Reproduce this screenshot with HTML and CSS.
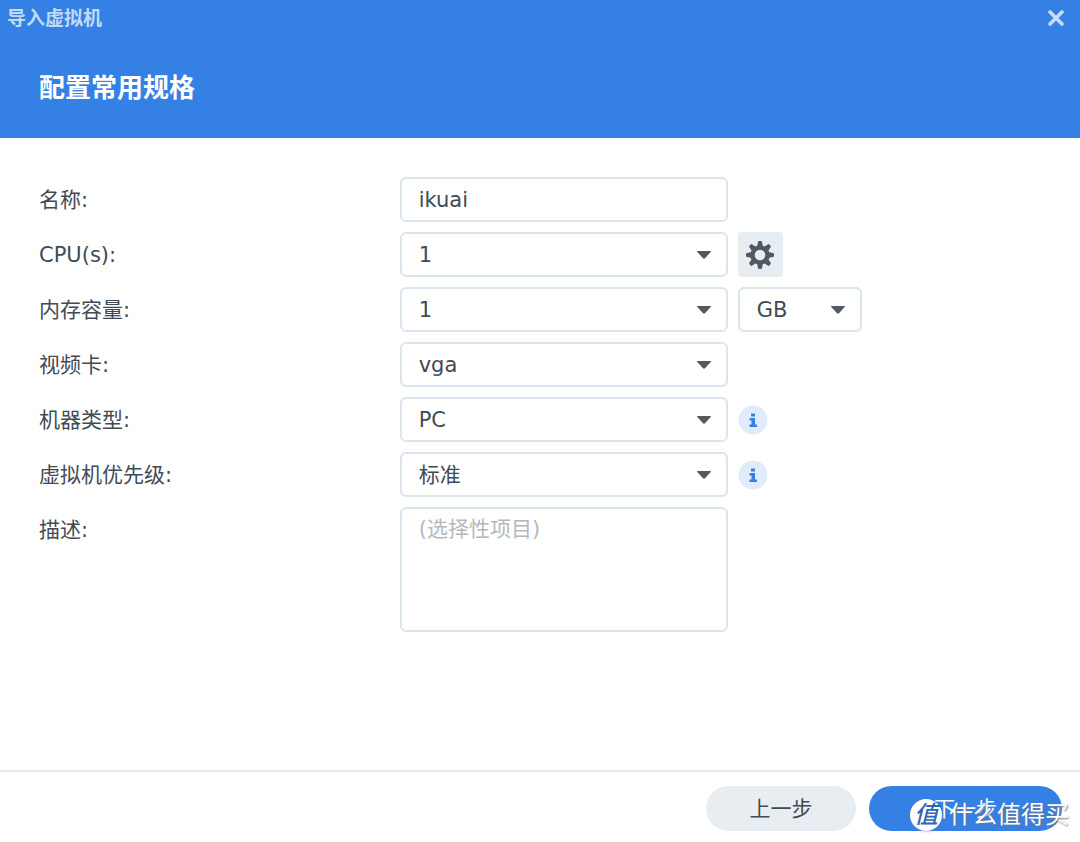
FILE: index.html
```html
<!DOCTYPE html>
<html lang="zh-CN">
<head>
    <meta charset="UTF-8">
    <meta name="viewport" content="width=device-width, initial-scale=1.0">
    <title>导入虚拟机</title>
    <link rel="stylesheet" href="styles.css">
</head>
<body>
    <header class="header">
        <div class="title-bar">
            <span class="title">导入虚拟机</span>
            <button type="button" class="close" aria-label="关闭">
                <svg width="18" height="18" viewBox="0 0 18 18"><path d="M3 3L15 15M15 3L3 15"/></svg>
            </button>
        </div>
        <h1 class="heading">配置常用规格</h1>
    </header>

    <form class="wizard" id="wizard">
        <div class="row">
            <label for="name">名称:</label>
            <input type="text" class="field" id="name" value="ikuai">
        </div>
        <div class="row">
            <label for="cpu">CPU(s):</label>
            <div class="select field">
                <select id="cpu"><option>1</option><option>2</option></select>
                <svg class="caret" width="14" height="8" viewBox="0 0 14 8"><path d="M.5 0h13q.8.4.2 1L8 7.300q-1 .9-2 0L.3 1Q-.3.400.5 0z"/></svg>
            </div>
            <button type="button" class="gear" aria-label="CPU 设置">
                <svg width="28" height="28" viewBox="-14 -14 28 28">
                    <g id="teeth">
                        <path id="tooth" d="M-3-8L-2-13Q-1.800-14-1-14H1Q1.800-14 2-13L3-8z"/>
                        <use href="#tooth" transform="rotate(45)"/>
                        <use href="#tooth" transform="rotate(90)"/>
                        <use href="#tooth" transform="rotate(135)"/>
                    </g>
                    <use href="#teeth" transform="rotate(180)"/>
                    <circle class="ring" r="7.500"/>
                </svg>
            </button>
        </div>
        <div class="row">
            <label for="memory">内存容量:</label>
            <div class="select field">
                <select id="memory"><option>1</option><option>2</option></select>
                <svg class="caret" width="14" height="8" viewBox="0 0 14 8"><path d="M.5 0h13q.8.4.2 1L8 7.300q-1 .9-2 0L.3 1Q-.3.400.5 0z"/></svg>
            </div>
            <div class="select unit">
                <select aria-label="单位"><option>GB</option><option>MB</option></select>
                <svg class="caret" width="14" height="8" viewBox="0 0 14 8"><path d="M.5 0h13q.8.4.2 1L8 7.300q-1 .9-2 0L.3 1Q-.3.400.5 0z"/></svg>
            </div>
        </div>
        <div class="row">
            <label for="video">视频卡:</label>
            <div class="select field">
                <select id="video"><option>vga</option></select>
                <svg class="caret" width="14" height="8" viewBox="0 0 14 8"><path d="M.5 0h13q.8.4.2 1L8 7.300q-1 .9-2 0L.3 1Q-.3.400.5 0z"/></svg>
            </div>
        </div>
        <div class="row">
            <label for="machine">机器类型:</label>
            <div class="select field">
                <select id="machine"><option>PC</option></select>
                <svg class="caret" width="14" height="8" viewBox="0 0 14 8"><path d="M.5 0h13q.8.4.2 1L8 7.300q-1 .9-2 0L.3 1Q-.3.400.5 0z"/></svg>
            </div>
            <button type="button" class="info" aria-label="机器类型说明">
                <svg width="30" height="30" viewBox="0 0 30 30"><circle cx="15" cy="15" r="14.500"/><path d="M13 8.500h4v3h-4zM11.500 13H17v6.500h2V22h-7.500v-2.500h2v-4h-2z"/></svg>
            </button>
        </div>
        <div class="row">
            <label for="priority">虚拟机优先级:</label>
            <div class="select field">
                <select id="priority"><option>标准</option></select>
                <svg class="caret" width="14" height="8" viewBox="0 0 14 8"><path d="M.5 0h13q.8.4.2 1L8 7.300q-1 .9-2 0L.3 1Q-.3.400.5 0z"/></svg>
            </div>
            <button type="button" class="info" aria-label="优先级说明">
                <svg width="30" height="30" viewBox="0 0 30 30"><circle cx="15" cy="15" r="14.500"/><path d="M13 8.500h4v3h-4zM11.500 13H17v6.500h2V22h-7.500v-2.500h2v-4h-2z"/></svg>
            </button>
        </div>
        <div class="row">
            <label for="desc">描述:</label>
            <textarea class="field" id="desc" placeholder="(选择性项目)"></textarea>
        </div>
    </form>

    <footer class="footer">
        <button type="button" class="btn">上一步</button>
        <button type="submit" form="wizard" class="btn btn-primary">下一步</button>
    </footer>

    <div class="watermark">
        <span class="badge">值</span>
        <span>什么值得买</span>
    </div>
</body>
</html>
```
FILE: styles.css
```css
* {
    box-sizing: border-box;
}
body {
    position: relative;
    display: flex;
    flex-direction: column;
    min-height: 100vh;
    margin: 0;
    background-color: #fff;
    color: #414b55;
    font-family: "DejaVu Sans", "Noto Sans CJK SC", sans-serif;
    font-size: 21px;
    line-height: 30px;
}
button, input, select, textarea {
    margin: 0;
    color: inherit;
    font: inherit;
}
button {
    padding: 0;
    border: 0;
    background: none;
    cursor: pointer;
}
svg {
    display: block;
}

/* header */
.header {
    padding-bottom: 32px;
    background-color: #3580e5;
    color: #fff;
}
.title-bar {
    display: flex;
    justify-content: space-between;
    align-items: center;
    height: 36px;
    padding: 0 15px 0 7px;
}
.title {
    color: #c2d9f7;
    font-size: 19px;
    font-weight: bold;
}
.close path {
    fill: none;
    stroke: #c9ddf8;
    stroke-width: 3.6;
    stroke-linecap: round;
}
.heading {
    margin: 34px 39px 0;
    font-size: 26px;
    font-weight: bold;
    line-height: 36px;
}

/* form */
.wizard {
    display: flex;
    flex: 1;
    flex-direction: column;
    gap: 10px;
    padding: 39px;
}
.row {
    display: flex;
    gap: 10px;
}
.row label {
    width: 35%;
    padding-top: 8px;
}
.field {
    width: 328px;
}
input, textarea, .select {
    height: 45px;
    border: 2px solid #dce4ee;
    border-radius: 6px;
    background-color: #fff;
}
input, textarea {
    padding: 0 17px;
    outline: none;
}
textarea {
    height: 125px;
    padding-top: 5px;
    resize: none;
}
textarea::placeholder {
    color: #b4b8bc;
}
.select {
    display: grid;
    align-items: center;
}
.select select {
    grid-area: 1 / 1;
    width: 100%;
    height: 41px;
    padding: 0 40px 0 17px;
    border: 0;
    outline: none;
    background: none;
    appearance: none;
}
.caret {
    grid-area: 1 / 1;
    justify-self: end;
    margin-right: 15px;
    fill: #505a64;
    pointer-events: none;
}
.unit {
    width: 124px;
}
.gear {
    display: flex;
    justify-content: center;
    align-items: center;
    width: 45px;
    height: 45px;
    border-radius: 4px;
    background-color: #e8edf2;
    fill: #505a64;
}
.gear .ring {
    fill: #e8edf2;
    stroke: #505a64;
    stroke-width: 4.4;
}
.info circle {
    fill: #e0ebfc;
}
.info path {
    fill: #3580e5;
}

/* footer */
.footer {
    display: flex;
    justify-content: flex-end;
    gap: 13px;
    padding: 14px 18px 11px;
    border-top: 2px solid #e6ebf3;
}
.btn {
    width: 150px;
    height: 45px;
    border-radius: 23px;
    background-color: #e8edf1;
}
.btn-primary {
    width: 193px;
    background-color: #3580e5;
    color: #fff;
}

.watermark {
    position: absolute;
    right: 11px;
    bottom: 11px;
    display: flex;
    align-items: center;
    gap: 7px;
    color: #fff;
    font-size: 24px;
    line-height: 32px;
    text-shadow: 1px 1px 2px #707780;
    pointer-events: none;
}
.badge {
    width: 32px;
    height: 32px;
    border-radius: 50%;
    background-color: #fff;
    color: #2b69b5;
    font-style: italic;
    font-weight: 500;
    text-align: center;
    text-shadow: none;
    box-shadow: 1px 1px 2px #70778066;
}
```
